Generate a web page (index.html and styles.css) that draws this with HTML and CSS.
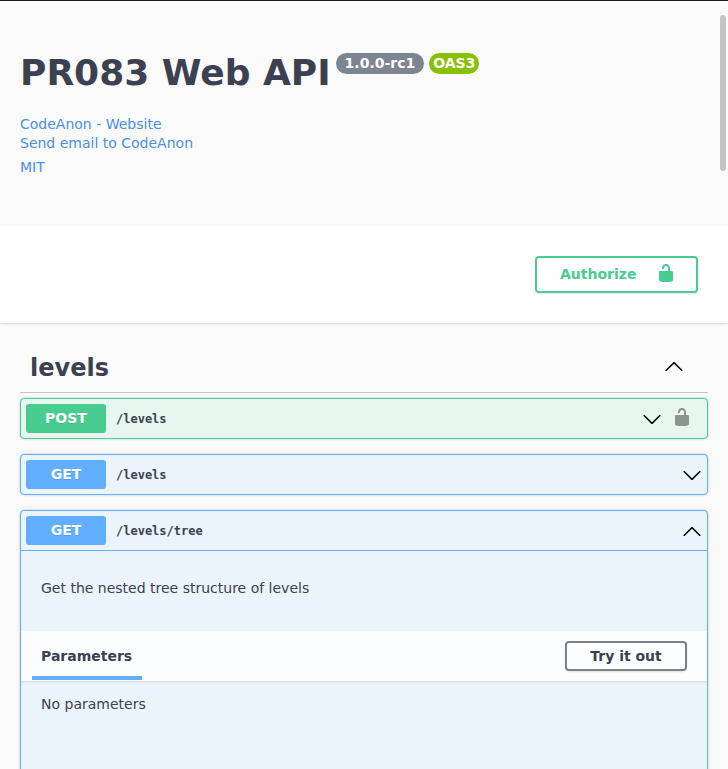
FILE: index.html
```html
<!DOCTYPE html>
<html lang="en">
<head>
<meta charset="utf-8">
<title>PR083 Web API</title>
<link rel="stylesheet" href="styles.css">
</head>
<body>
<header class="info">
  <h1 class="title">PR083 Web API<span class="badges"><span class="badge">1.0.0-rc1</span><span class="badge oas">OAS3</span></span></h1>
  <div class="contact"><a>CodeAnon - Website</a><a>Send email to CodeAnon</a></div>
  <a class="license">MIT</a>
</header>
<section class="schemes">
  <button class="authorize"><span>Authorize</span><svg width="20" height="20" viewBox="0 0 20 20"><path fill="currentColor" d="M15.8 8H14V5.6C14 2.703 12.665 1 10 1 7.334 1 6 2.703 6 5.6V6h2v-.801C8 3.754 8.797 3 10 3c1.203 0 2 .754 2 2.199V8H4c-.553 0-1 .646-1 1.199V17c0 .549.428 1.139.951 1.307l1.197.387C5.672 18.861 6.55 19 7.1 19h5.8c.549 0 1.428-.139 1.951-.307l1.196-.387c.524-.167.953-.757.953-1.306V9.199C17 8.646 16.352 8 15.8 8z"/></svg></button>
</section>
<main class="operations">
  <div class="tag"><h2>levels</h2><svg class="arrow" viewBox="0 0 20 20"><path d="M 17.418 14.908 C 17.69 15.176 18.127 15.176 18.397 14.908 C 18.667 14.64 18.668 14.207 18.397 13.939 L 10.489 6.109 C 10.219 5.841 9.782 5.841 9.51 6.109 L 1.602 13.939 C 1.332 14.207 1.332 14.64 1.602 14.908 C 1.873 15.176 2.311 15.176 2.581 14.908 L 10 7.767 Z"/></svg></div>
  <div class="block post">
    <div class="summary"><span class="method">POST</span><code>/levels</code><svg class="arrow" viewBox="0 0 20 20"><path d="M17.418 6.109c.272-.268.709-.268.979 0s.271.701 0 .969l-7.908 7.83c-.27.268-.707.268-.979 0l-7.908-7.83c-.27-.268-.27-.701 0-.969.271-.268.709-.268.979 0L10 13.25z"/></svg><svg class="lock" width="20" height="20" viewBox="0 0 20 20"><path d="M15.8 8H14V5.6C14 2.703 12.665 1 10 1 7.334 1 6 2.703 6 5.6V6h2v-.801C8 3.754 8.797 3 10 3c1.203 0 2 .754 2 2.199V8H4c-.553 0-1 .646-1 1.199V17c0 .549.428 1.139.951 1.307l1.197.387C5.672 18.861 6.55 19 7.1 19h5.8c.549 0 1.428-.139 1.951-.307l1.196-.387c.524-.167.953-.757.953-1.306V9.199C17 8.646 16.352 8 15.8 8z"/></svg></div>
  </div>
  <div class="block get">
    <div class="summary"><span class="method">GET</span><code>/levels</code><svg class="arrow" viewBox="0 0 20 20"><path d="M17.418 6.109c.272-.268.709-.268.979 0s.271.701 0 .969l-7.908 7.83c-.27.268-.707.268-.979 0l-7.908-7.83c-.27-.268-.27-.701 0-.969.271-.268.709-.268.979 0L10 13.25z"/></svg></div>
  </div>
  <div class="block get open">
    <div class="summary"><span class="method">GET</span><code>/levels/tree</code><svg class="arrow" viewBox="0 0 20 20"><path d="M 17.418 14.908 C 17.69 15.176 18.127 15.176 18.397 14.908 C 18.667 14.64 18.668 14.207 18.397 13.939 L 10.489 6.109 C 10.219 5.841 9.782 5.841 9.51 6.109 L 1.602 13.939 C 1.332 14.207 1.332 14.64 1.602 14.908 C 1.873 15.176 2.311 15.176 2.581 14.908 L 10 7.767 Z"/></svg></div>
    <p class="description">Get the nested tree structure of levels</p>
    <div class="section-header"><h4>Parameters</h4><button class="try">Try it out</button></div>
    <p class="empty">No parameters</p>
  </div>
</main>
<div class="scrollbar"></div>
</body>
</html>
```
FILE: styles.css
```css
* { box-sizing: border-box; }
body {
  margin: 0;
  height: 769px;
  overflow: hidden;
  position: relative;
  border-top: 1px solid #1b1b1b;
  background: #fafafa;
  color: #3b4151;
  font: 14px "DejaVu Sans", sans-serif;
}
h1, h2, h4, p { margin: 0; }
button {
  font: bold 14px "DejaVu Sans", sans-serif;
  background: transparent;
  box-shadow: 0 1px 2px rgba(0, 0, 0, .1);
}
.info { height: 225px; padding: 50px 20px 0; }
.title { display: flex; align-items: flex-start; font-size: 36px; line-height: 44px; }
.badges { display: flex; gap: 5px; margin: 2px 0 0 5px; }
.badge {
  height: 21px;
  padding: 0 9px;
  border-radius: 11px;
  background: #7d8492;
  color: #fff;
  font-size: 14px;
  line-height: 20px;
}
.oas { background: #89bf04; padding: 0 4px; }
.contact { display: flex; flex-direction: column; margin-top: 20px; line-height: 19px; }
.info a { color: #4990e2; }
.license { display: block; margin-top: 5px; line-height: 19px; }
.schemes {
  display: flex;
  justify-content: flex-end;
  align-items: center;
  height: 97px;
  padding-right: 30px;
  background: #fff;
  box-shadow: 0 1px 2px rgba(0, 0, 0, .15);
}
.authorize {
  display: flex;
  align-items: center;
  justify-content: space-between;
  width: 163px;
  height: 37px;
  padding: 0 20px 2px 23px;
  border: 2px solid #49cc90;
  border-radius: 4px;
  color: #49cc90;
}
.authorize svg { margin-bottom: 2px; }
.operations { height: 446px; overflow: hidden; padding: 20px 20px 0; }
.tag {
  display: flex;
  align-items: center;
  justify-content: space-between;
  height: 50px;
  margin-bottom: 5px;
  padding: 0 24px 0 10px;
  border-bottom: 1px solid rgba(59, 65, 81, .3);
}
.tag h2 { font-size: 24px; line-height: 30px; }
.arrow { width: 20px; height: 20px; fill: #000; }
.tag .arrow { margin-bottom: 3px; }
.block {
  margin-bottom: 15px;
  border: 1px solid #61affe;
  border-radius: 4px;
  background: #ebf3fb;
  box-shadow: 0 0 3px rgba(0, 0, 0, .19);
}
.post { border-color: #49cc90; background: #e8f6f0; }
.summary { display: flex; align-items: center; height: 39px; padding: 0 5px; }
.method {
  width: 80px;
  height: 29px;
  border-radius: 3px;
  background: #61affe;
  color: #fff;
  font-weight: bold;
  line-height: 28px;
  text-align: center;
  text-shadow: 0 1px 0 rgba(0, 0, 0, .1);
}
.post .method { background: #49cc90; }
code { flex: 1; padding-left: 10px; font: bold 12px "DejaVu Sans Mono", monospace; }
.lock { margin: -4px 10px 0; fill: #8b948f; }
.open { height: 300px; }
.open .summary { height: 40px; border-bottom: 1px solid #61affe; }
.description { height: 80px; padding: 28px 20px 0; line-height: 19px; }
.section-header {
  display: flex;
  align-items: center;
  justify-content: space-between;
  height: 50px;
  padding: 0 20px 0 11px;
  background: rgba(255, 255, 255, .8);
  box-shadow: 0 1px 2px rgba(0, 0, 0, .1);
}
.section-header h4 {
  height: 48px;
  width: 110px;
  padding-left: 9px;
  border-bottom: 4px solid #61affe;
  font-size: 14px;
  line-height: 49px;
}
.try {
  width: 122px;
  height: 30px;
  padding: 0;
  border: 2px solid #808080;
  border-radius: 4px;
  color: #3b4151;
}
.empty { padding: 14px 20px; line-height: 19px; }
.scrollbar {
  position: absolute;
  top: 14px;
  right: 2px;
  width: 6px;
  height: 156px;
  border-radius: 3px;
  background: #c4c4c4;
}
```
